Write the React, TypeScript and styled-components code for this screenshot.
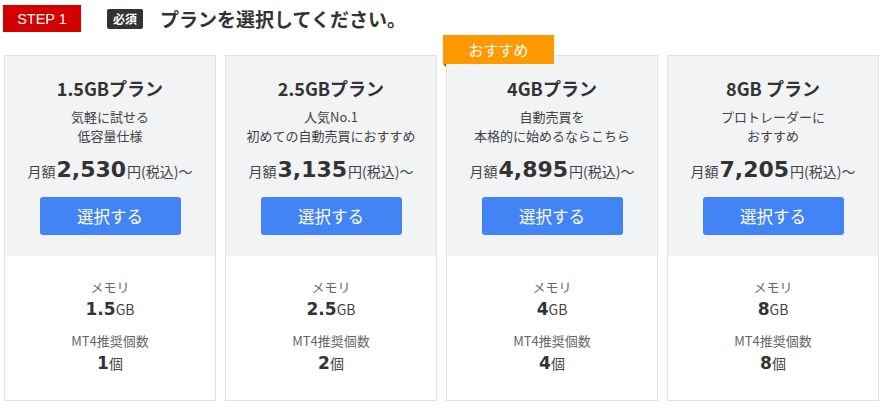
import React from 'react';
import styled, { createGlobalStyle } from 'styled-components';

const GlobalStyle = createGlobalStyle`
  body {
    margin: 0;
    background: #fff;
    font-family: "Noto Sans CJK JP", "Noto Sans", sans-serif;
    color: #333;
  }
`;

const Page = styled.div`
  width: 886px;
  height: 408px;
  padding: 5px 0 0 3px;
  box-sizing: border-box;
`;

const Header = styled.div`
  display: flex;
  align-items: center;
  height: 27px;
`;

const Step = styled.div`
  width: 78px;
  height: 27px;
  background: #d40000;
  color: #fff;
  font-family: "Liberation Sans", Arial, sans-serif;
  font-size: 14.5px;
  display: flex;
  align-items: center;
  justify-content: center;
`;

const Required = styled.span`
  margin-left: 26px;
  background: #333;
  color: #fff;
  font-size: 12px;
  font-weight: bold;
  padding: 0 6px;
  height: 20px;
  line-height: 20px;
  border-radius: 2px;
`;

const Title = styled.h1`
  margin: 0 0 0 17px;
  font-size: 19px;
  font-weight: bold;
  color: #333;
  line-height: 27px;
`;

const Cards = styled.div`
  display: grid;
  grid-template-columns: repeat(4, 212px);
  column-gap: 9px;
  margin: 23px 0 0 1px;
`;

const Card = styled.div`
  position: relative;
  border: 1px solid #e3e3e6;
  display: flex;
  flex-direction: column;
  height: 346px;
  box-sizing: border-box;
`;

const Ribbon = styled.div`
  position: absolute;
  left: -4px;
  top: -21px;
  width: 111px;
  height: 29px;
  background: #ff9900;
  color: #fff;
  font-size: 15px;
  display: flex;
  align-items: center;
  justify-content: center;
  &::after {
    content: '';
    position: absolute;
    left: 0;
    bottom: -3px;
    border-top: 3px solid #9a5c00;
    border-left: 3px solid transparent;
  }
`;

const Top = styled.div`
  background: #f2f3f5;
  height: 200px;
  display: flex;
  flex-direction: column;
  align-items: center;
  padding-top: 20px;
  box-sizing: border-box;
`;

const PlanName = styled.div`
  font-size: 18px;
  font-weight: bold;
  line-height: 24px;
`;

const Desc = styled.div`
  margin-top: 7px;
  font-size: 13px;
  line-height: 19px;
  text-align: center;
  color: #444;
`;

const Price = styled.div`
  margin-top: 8px;
  font-size: 14px;
  color: #444;
  display: flex;
  align-items: baseline;
  line-height: 34px;
`;

const Amount = styled.span`
  font-family: "DejaVu Sans", "Noto Sans", sans-serif;
  font-size: 22px;
  font-weight: bold;
  color: #333;
  margin: 0 1px;
`;

const SelectButton = styled.button`
  margin-top: 9px;
  width: 141px;
  height: 38px;
  border: none;
  border-radius: 3px;
  background: #4284f3;
  color: #fff;
  font-family: "Noto Sans CJK JP", sans-serif;
  font-size: 16.5px;
  cursor: pointer;
`;

const Bottom = styled.div`
  flex: 1;
  display: flex;
  flex-direction: column;
  align-items: center;
  padding-top: 21px;
`;

const Label = styled.div<{ $gap?: number }>`
  font-size: 13px;
  color: #666;
  line-height: 20px;
  margin-top: ${p => p.$gap ?? 0}px;
`;

const Value = styled.div`
  font-size: 14px;
  color: #444;
  line-height: 24px;
  display: flex;
  align-items: baseline;
`;

const Num = styled.span`
  font-family: "DejaVu Sans", "Noto Sans", sans-serif;
  font-size: 17px;
  font-weight: bold;
  color: #333;
`;

type Plan = {
  name: string;
  desc: string[];
  price: string;
  mem: string;
  count: string;
  recommended?: boolean;
};

const plans: Plan[] = [
  { name: '1.5GBプラン', desc: ['気軽に試せる', '低容量仕様'], price: '2,530', mem: '1.5', count: '1' },
  { name: '2.5GBプラン', desc: ['人気No.1', '初めての自動売買におすすめ'], price: '3,135', mem: '2.5', count: '2' },
  { name: '4GBプラン', desc: ['自動売買を', '本格的に始めるならこちら'], price: '4,895', mem: '4', count: '4', recommended: true },
  { name: '8GB プラン', desc: ['プロトレーダーに', 'おすすめ'], price: '7,205', mem: '8', count: '8' },
];

export default function App() {
  return (
    <Page>
      <GlobalStyle />
      <Header>
        <Step>STEP 1</Step>
        <Required>必須</Required>
        <Title>プランを選択してください。</Title>
      </Header>
      <Cards>
        {plans.map(p => (
          <Card key={p.name}>
            {p.recommended && <Ribbon>おすすめ</Ribbon>}
            <Top>
              <PlanName>{p.name}</PlanName>
              <Desc>
                {p.desc.map(d => <div key={d}>{d}</div>)}
              </Desc>
              <Price>
                月額<Amount>{p.price}</Amount>円(税込)〜
              </Price>
              <SelectButton>選択する</SelectButton>
            </Top>
            <Bottom>
              <Label>メモリ</Label>
              <Value><Num>{p.mem}</Num>GB</Value>
              <Label $gap={10}>MT4推奨個数</Label>
              <Value><Num>{p.count}</Num>個</Value>
            </Bottom>
          </Card>
        ))}
      </Cards>
    </Page>
  );
}
